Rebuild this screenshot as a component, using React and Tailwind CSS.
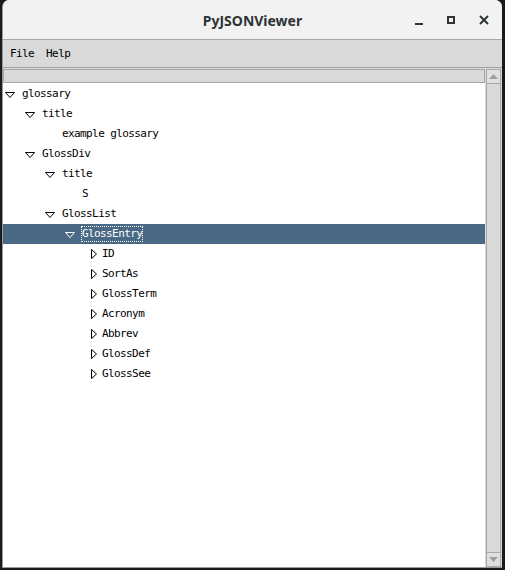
import React from 'react';

const rows = [
  { label: 'glossary', level: 0, icon: 'open' },
  { label: 'title', level: 1, icon: 'open' },
  { label: 'example glossary', level: 2, icon: null },
  { label: 'GlossDiv', level: 1, icon: 'open' },
  { label: 'title', level: 2, icon: 'open' },
  { label: 'S', level: 3, icon: null },
  { label: 'GlossList', level: 2, icon: 'open' },
  { label: 'GlossEntry', level: 3, icon: 'open', selected: true },
  { label: 'ID', level: 4, icon: 'closed' },
  { label: 'SortAs', level: 4, icon: 'closed' },
  { label: 'GlossTerm', level: 4, icon: 'closed' },
  { label: 'Acronym', level: 4, icon: 'closed' },
  { label: 'Abbrev', level: 4, icon: 'closed' },
  { label: 'GlossDef', level: 4, icon: 'closed' },
  { label: 'GlossSee', level: 4, icon: 'closed' },
];

const indent = ['pl-[2px]', 'pl-[22px]', 'pl-[42px]', 'pl-[62px]', 'pl-[82px]'];

// open (down) and closed (right) tree indicators
const Indicator = ({ type, selected }) => {
  const stroke = selected ? '#ffffff' : '#000000';
  if (type === 'open') {
    return (
      <svg width="16" height="20" viewBox="0 0 16 20" className="shrink-0">
        <path d="M0.5 8.5 H9.5 L5 13.5 Z" fill="none" stroke={stroke} strokeWidth="1" />
      </svg>
    );
  }
  if (type === 'closed') {
    return (
      <svg width="16" height="20" viewBox="0 0 16 20" className="shrink-0">
        <path d="M6.5 5.5 V14.5 L11.5 10 Z" fill="none" stroke={stroke} strokeWidth="1" />
      </svg>
    );
  }
  return <div className="w-[16px] shrink-0" />;
};

const TreeRow = ({ row }) => (
  <div
    className={`flex items-center h-[20px] ${indent[row.level]} ${
      row.selected ? 'bg-[#4a6984] text-white' : 'text-black'
    }`}
  >
    <Indicator type={row.icon} selected={row.selected} />
    <span
      className={`leading-[16px] px-px ${
        row.selected ? 'outline outline-1 outline-dotted outline-white -outline-offset-1' : ''
      }`}
    >
      {row.label}
    </span>
  </div>
);

const TitleButtons = () => (
  <div className="absolute right-0 top-0 h-[40px] flex items-center text-[#2e3436]">
    <div className="w-[32px] h-full flex items-center justify-center">
      <div className="w-[8px] h-[2px] bg-[#2e3436] mt-[8px]" />
    </div>
    <div className="w-[32px] h-full flex items-center justify-center">
      <div className="w-[8px] h-[8px] border-2 border-[#2e3436]" />
    </div>
    <div className="w-[34px] h-full flex items-center justify-center">
      <svg width="10" height="10" viewBox="0 0 10 10">
        <path d="M1 1 L9 9 M9 1 L1 9" stroke="#2e3436" strokeWidth="2" />
      </svg>
    </div>
    <div className="w-[1px]" />
  </div>
);

const Scrollbar = () => (
  <div className="w-[15px] flex flex-col bg-[#d9d9d9] border border-[#a8a8a8] ml-px">
    <div className="h-[14px] flex items-center justify-center border-b border-[#a8a8a8] bg-[#e0e0e0]">
      <svg width="9" height="5" viewBox="0 0 9 5">
        <path d="M0 5 L4.5 0 L9 5 Z" fill="#a0a0a0" />
      </svg>
    </div>
    <div className="flex-1" />
    <div className="h-[14px] flex items-center justify-center border-t border-[#a8a8a8] bg-[#e0e0e0]">
      <svg width="9" height="5" viewBox="0 0 9 5">
        <path d="M0 0 L9 0 L4.5 5 Z" fill="#a0a0a0" />
      </svg>
    </div>
  </div>
);

export default function App() {
  return (
    <div className="w-[505px] h-[570px] bg-[#1b1b1b] pl-[2px] pr-[3px] pb-[2px] overflow-hidden">
      <div className="h-full flex flex-col rounded-t-[7px] overflow-hidden bg-[#d9d9d9] border-l border-b border-[#9a9a9a]">
        {/* title bar */}
        <div className="relative h-[40px] shrink-0 bg-[#f2f2f2] border-b border-[#a8a8a8] flex items-center justify-center">
          <span className="font-['Noto_Sans',sans-serif] font-bold text-[14px] text-[#2e3436] mt-[1px]">
            PyJSONViewer
          </span>
          <TitleButtons />
        </div>

        {/* menu bar */}
        <div className="h-[28px] shrink-0 flex items-center gap-[12px] pl-[7px] pt-[1px] border-b border-[#a0a0a0] font-['DejaVu_Sans_Mono',monospace] text-[11px] tracking-[-0.6px] text-black">
          <span>File</span>
          <span>Help</span>
        </div>

        {/* tree + scrollbar */}
        <div className="flex-1 flex pt-px pr-[1px] min-h-0">
          <div className="flex-1 flex flex-col bg-white font-['DejaVu_Sans_Mono',monospace] text-[11px] tracking-[-0.6px]">
            <div className="h-[14px] shrink-0 bg-[#d9d9d9] border border-[#a8a8a8] mb-px" />
            {rows.map((row, i) => (
              <TreeRow key={i} row={row} />
            ))}
          </div>
          <Scrollbar />
        </div>
      </div>
    </div>
  );
}
